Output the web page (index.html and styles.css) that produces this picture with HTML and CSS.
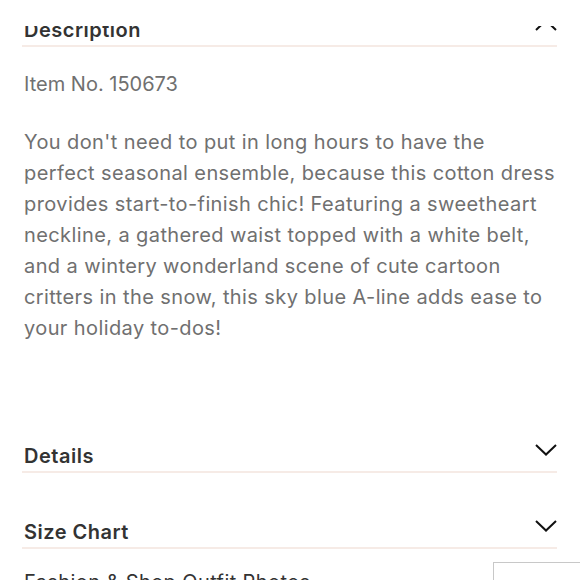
FILE: index.html
```html
<!DOCTYPE html>
<html lang="en">
<head>
<meta charset="utf-8">
<title>Product description</title>
<link rel="stylesheet" href="styles.css">
</head>
<body>
<div class="top-cover"></div>
<main class="product-info">
  <section class="acc acc-open">
    <header class="acc-head">
      <h2 class="acc-title">Description</h2>
      <svg class="chev" viewBox="0 0 22 12" width="22" height="12"><polyline points="1,11 11,1.5 21,11" /></svg>
    </header>
    <div class="acc-body">
      <p class="item-no">Item No. 150673</p>
      <p class="desc">You don't need to put in long hours to have the perfect seasonal ensemble, because this cotton dress provides start-to-finish chic! Featuring a sweetheart neckline, a gathered waist topped with a white belt, and a wintery wonderland scene of cute cartoon critters in the snow, this sky blue A-line adds ease to your holiday to-dos!</p>
    </div>
  </section>
  <section class="acc">
    <header class="acc-head">
      <h2 class="acc-title">Details</h2>
      <svg class="chev" viewBox="0 0 22 12" width="22" height="12"><polyline points="1,1 11,10.5 21,1" /></svg>
    </header>
  </section>
  <section class="acc">
    <header class="acc-head">
      <h2 class="acc-title">Size Chart</h2>
      <svg class="chev" viewBox="0 0 22 12" width="22" height="12"><polyline points="1,1 11,10.5 21,1" /></svg>
    </header>
  </section>
  <div class="outfit-row">
    <h3 class="outfit-title">Fashion &amp; Shop Outfit Photos</h3>
    <div class="outfit-box"></div>
  </div>
</main>
</body>
</html>
```
FILE: styles.css
```css
html, body {
  margin: 0;
  padding: 0;
  background: #fff;
  overflow: hidden;
}
body {
  font-family: Inter, "Noto Sans", sans-serif;
  color: #333;
}
.top-cover {
  position: fixed;
  top: 0;
  left: 0;
  right: 0;
  height: 26px;
  background: #fff;
  z-index: 5;
}
.product-info {
  padding: 18px 23px 0 22px;
}
.acc + .acc {
  margin-top: 47px;
}
.acc-head {
  display: flex;
  justify-content: space-between;
  align-items: flex-start;
  padding-bottom: 3px;
  border-bottom: 2px solid #f6ebe6;
}
.acc-title {
  margin: 0;
  padding-left: 2px;
  font-size: 20px;
  line-height: 24px;
  font-weight: 600;
  letter-spacing: 0.5px;
  color: #333;
}
.chev {
  margin-top: 0;
  fill: none;
  stroke: #111;
  stroke-width: 2;
}
.acc-open .chev {
  margin-top: 1px;
}
.acc-body {
  padding: 22px 0 53px 2px;
  color: #707070;
  font-size: 20px;
  letter-spacing: 0.4px;
}
.item-no {
  margin: 0;
  line-height: 31px;
  letter-spacing: 0;
}
.desc {
  margin: 27px 0 0;
  line-height: 31px;
}
.outfit-row {
  display: flex;
  justify-content: space-between;
  align-items: flex-start;
  margin-top: 13px;
  margin-right: -23px;
}
.outfit-title {
  margin: 8px 0 0;
  padding-left: 2px;
  font-size: 20px;
  line-height: 24px;
  font-weight: 400;
  letter-spacing: 0.4px;
  color: #333;
}
.outfit-box {
  width: 100px;
  height: 60px;
  margin-right: -15px;
  border: 1px solid #c8c8c8;
  background: #fff;
}
```
